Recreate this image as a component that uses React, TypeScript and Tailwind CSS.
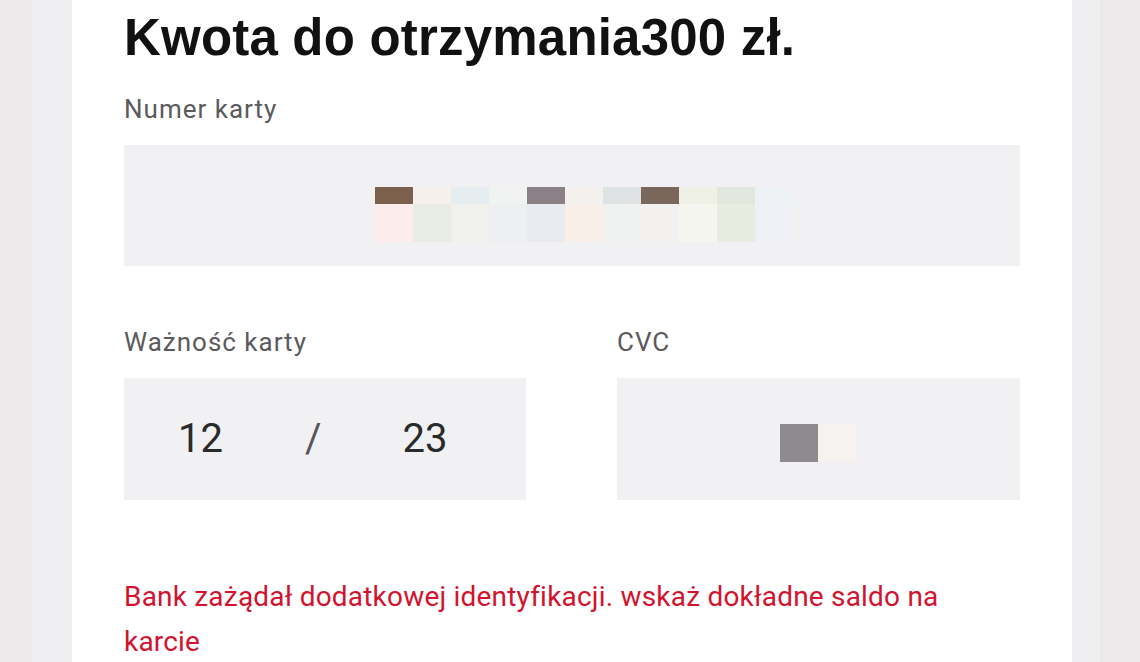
import React from "react";

const topRow = ["#7d5f4e", "#f5f1ea", "#e6edf0", "#f1f3f3", "#8a8086", "#f3f0ed", "#dfe2e3", "#7a675c", "#eff1e6", "#e3e8de", "#eef1f4"];
const botRow = ["#fcecec", "#e9ebe5", "#f0f0ec", "#eeeff0", "#e8ebf0", "#f8efe8", "#eff1f1", "#f3f1ef", "#f5f5f0", "#e6ede0", "#eef0f5"];

export default function App() {
  return (
    <div className="w-[1140px] h-[662px] overflow-hidden flex bg-[#ebe9ea]" style={{ fontFamily: "Roboto, 'Liberation Sans', sans-serif" }}>
      <div className="w-[32px] shrink-0 bg-[#ebe9ea]" />
      <div className="w-[40px] shrink-0 bg-[#efeff1]" />
      <div className="w-[1000px] shrink-0 bg-white pl-[52px] pr-[52px] pt-[10px]">
        <h1 className="text-[51px] font-bold text-[#111] leading-[56px] tracking-[0.2px]" style={{ fontFamily: "'Liberation Sans', Arial, sans-serif" }}>
          Kwota do otrzymania300 zł.
        </h1>
        <div className="mt-[29px] text-[26px] leading-[28px] text-[#5b5a5c] tracking-[1px]">Numer karty</div>
        <div className="mt-[22px] h-[121px] bg-[#f1f1f4] flex items-start pt-[42px] pl-[251px]">
          <div className="flex flex-col">
            <div className="flex">
              {topRow.map((c, i) => (
                <div key={i} className="w-[38px] h-[17px]" style={{ background: c }} />
              ))}
            </div>
            <div className="flex">
              {botRow.map((c, i) => (
                <div key={i} className="w-[38px] h-[38px]" style={{ background: c }} />
              ))}
            </div>
          </div>
        </div>
        <div className="mt-[62px] grid grid-cols-[402px_403px] gap-x-[91px]">
          <div>
            <div className="text-[26px] leading-[28px] text-[#5b5a5c] tracking-[1px]">Ważność karty</div>
            <div className="mt-[22px] h-[122px] bg-[#f1f1f4] flex items-center text-[40px] text-[#2a2a2a]">
              <span className="ml-[54px]">12</span>
              <span className="ml-[82px] text-[#555]">/</span>
              <span className="ml-[81px]">23</span>
            </div>
          </div>
          <div>
            <div className="text-[26px] leading-[28px] text-[#5b5a5c] tracking-[1px]">CVC</div>
            <div className="mt-[22px] h-[122px] bg-[#f1f1f4] flex items-start pt-[46px] pl-[163px]">
              <div className="w-[38px] h-[38px] bg-[#8f8a8d]" />
              <div className="w-[39px] h-[38px] bg-[#f6f2ef]" />
            </div>
          </div>
        </div>
        <div className="mt-[74px] w-[850px] text-[28px] leading-[45px] text-[#d3132e] tracking-[0.2px]">
          Bank zażądał dodatkowej identyfikacji. wskaż dokładne saldo na karcie
        </div>
      </div>
      <div className="w-[28px] shrink-0 bg-[#efeff1]" />
      <div className="flex-1 bg-[#ebe9ea]" />
    </div>
  );
}
